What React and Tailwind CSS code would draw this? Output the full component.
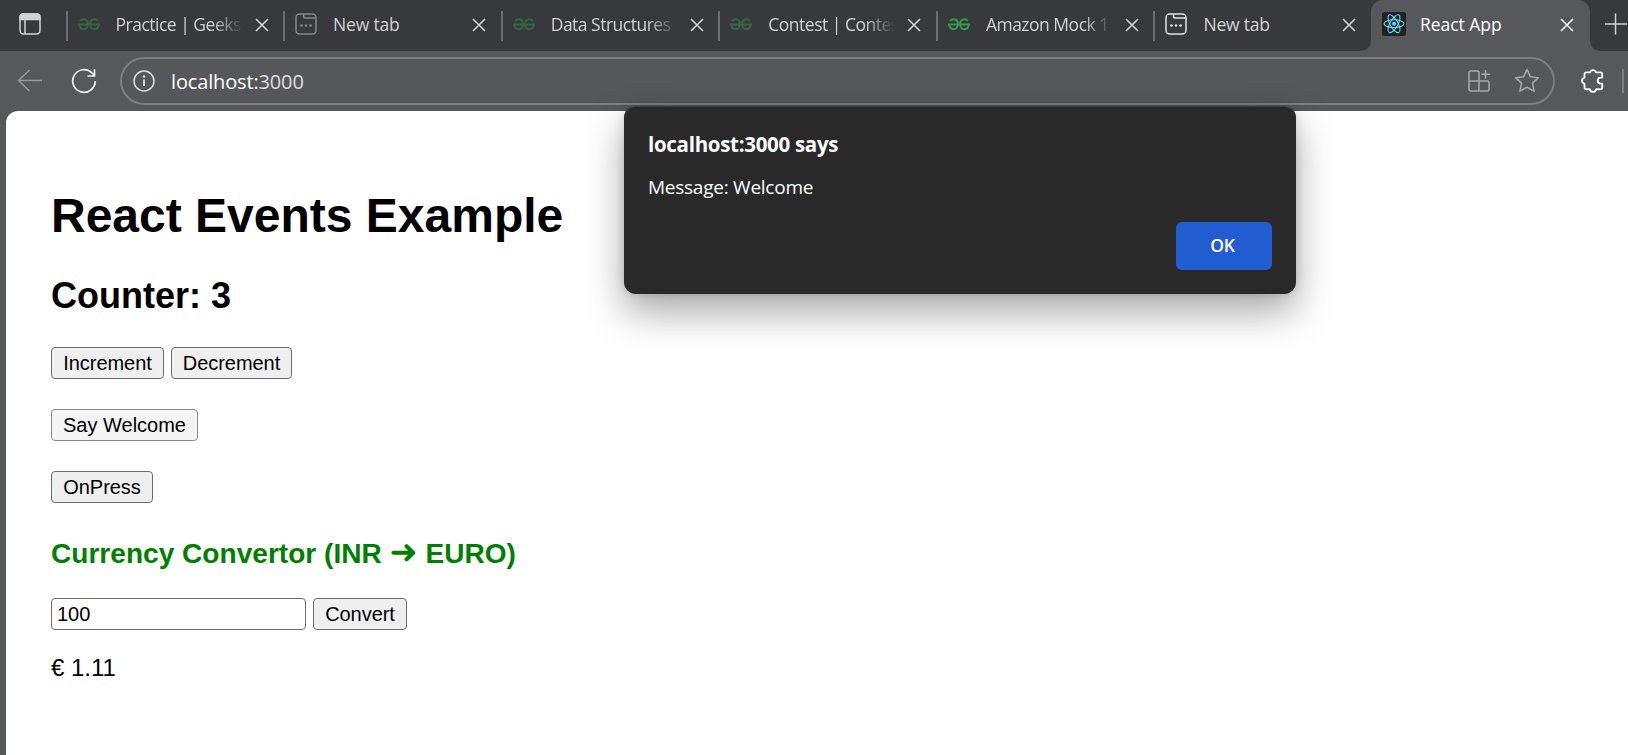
const UI = "font-['Open_Sans','Noto_Sans',sans-serif]";

const GfgIcon = ({ dim }) => (
  <svg className={`h-6 w-6 ${dim ? "opacity-45" : ""}`} viewBox="0 0 24 24" fill="none" stroke="#2f9e4b" strokeWidth="2">
    <path d="M3.2 9C4 7.700 5.200 7.200 6.500 7.200c2.700 0 4.400 1.900 4.400 4.800S9.300 17.200 6.700 17.200c-2.600 0-4.300-1.900-4.400-4.700" />
    <path d="M20.800 9c-.8-1.300-2-1.800-3.300-1.800-2.700 0-4.400 1.900-4.400 4.800s1.600 5.200 4.200 5.200 4.300-1.900 4.400-4.700" />
    <path d="M1 12.500h22" />
  </svg>
);

const NewTabIcon = ({ dim }) => (
  <svg className={`h-6 w-6 ${dim ? "opacity-45" : ""}`} viewBox="0 0 24 24" fill="none" stroke="#e4e4e5" strokeWidth="1.5">
    <rect x="2" y="2" width="20" height="20" rx="3.500" />
    <path d="M9.500 2v2.500c0 1 .5 1.500 1.500 1.500h11" />
    <g fill="#e4e4e5" stroke="none">
      <circle cx="7.500" cy="13.500" r="1.300" />
      <circle cx="12" cy="13.500" r="1.300" />
      <circle cx="16.500" cy="13.500" r="1.300" />
    </g>
  </svg>
);

const ReactIcon = () => (
  <svg className="h-6 w-6" viewBox="0 0 24 24" fill="none" stroke="#61dafb" strokeWidth="1.100">
    <rect width="24" height="24" rx="2.500" fill="#222222" stroke="none" />
    <ellipse cx="12" cy="11.700" rx="10" ry="3.900" />
    <ellipse cx="12" cy="11.700" rx="10" ry="3.900" transform="rotate(60 12 11.700)" />
    <ellipse cx="12" cy="11.700" rx="10" ry="3.900" transform="rotate(120 12 11.700)" />
    <circle cx="12" cy="11.700" r="2" fill="#61dafb" stroke="none" />
  </svg>
);

const CloseIcon = ({ bright }) => (
  <svg className="-mt-px h-3.5 w-3.5" viewBox="0 0 14 14" fill="none" stroke={bright ? "#ffffff" : "#d6d6d7"} strokeWidth="1.600">
    <path d="M1 1l12 12M13 1L1 13" />
  </svg>
);

const tabs = [
  { title: "Practice | Geeksf", icon: <GfgIcon dim />, fade: true },
  { title: "New tab", icon: <NewTabIcon dim /> },
  { title: "Data Structures", icon: <GfgIcon dim />, fade: true },
  { title: "Contest | Contes", icon: <GfgIcon dim />, fade: true },
  { title: "Amazon Mock 1", icon: <GfgIcon />, fade: true },
  { title: "New tab", icon: <NewTabIcon /> },
];

function Tab({ title, icon, fade }) {
  return (
    <div className="flex h-[51px] w-[217.600px] shrink-0 items-center">
      <div className="h-[30px] w-[2px] shrink-0 bg-[#6c6d70]" />
      <div className="ml-[9px] -mt-[3px] shrink-0">{icon}</div>
      <div
        className={`ml-[15px] -mt-[4px] w-[130px] shrink-0 overflow-hidden whitespace-nowrap text-[17.500px] leading-6 text-[#d2d2d3] ${
          fade ? "tracking-[-0.500px] [mask-image:linear-gradient(to_right,black_97px,transparent_127px)]" : "tracking-[-0.200px]"
        }`}
      >
        {title}
      </div>
      <div className="ml-[9px] shrink-0">
        <CloseIcon />
      </div>
    </div>
  );
}

function TabBar() {
  return (
    <div className="flex h-[51px] items-center overflow-hidden bg-[#38393d]">
      <div className="w-[65.500px] shrink-0 pl-[18px]">
        <svg className="-mt-[3px] h-6 w-6" viewBox="0 0 24 24" fill="none" stroke="#d2d2d3" strokeWidth="1.500">
          <rect x="2" y="2" width="20" height="20" rx="3.500" />
          <path d="M2 7.500V5a3 3 0 0 1 3-3h14a3 3 0 0 1 3 3v2.500z" fill="#d2d2d3" />
          <path d="M7 7v15" />
        </svg>
      </div>
      {tabs.map((t, i) => (
        <Tab key={i} {...t} />
      ))}
      <div className="-ml-[10px] flex h-[51px] w-[10px] shrink-0 bg-[#57585c]">
        <div className="h-full w-full rounded-br-[10px] bg-[#38393d]" />
      </div>
      <div className="flex h-[51px] w-[219px] shrink-0 items-center rounded-t-[12px] bg-[#57585c] pl-[11px]">
        <div className="-mt-[3px]">
          <ReactIcon />
        </div>
        <div className="ml-[14px] -mt-[4px] w-[129px] text-[17.500px] leading-6 tracking-[-0.050px] text-white">React App</div>
        <div className="ml-[11px]">
          <CloseIcon bright />
        </div>
      </div>
      <div className="h-[51px] w-10 shrink-0 bg-[#57585c]">
        <div className="flex h-full items-center rounded-bl-[10px] bg-[#38393d] pl-[15px]">
          <svg className="-mt-1 h-[22px] w-[22px] shrink-0" viewBox="0 0 22 22" fill="none" stroke="#d2d2d3" strokeWidth="1.500">
            <path d="M10.500 .5v21M0 11h22" />
          </svg>
        </div>
      </div>
    </div>
  );
}

function Toolbar() {
  return (
    <div className="flex h-[60px] items-center overflow-hidden bg-[#57585c]">
      <svg className="ml-[17px] h-[26px] w-[26px] shrink-0" viewBox="0 0 26 26" fill="none" stroke="#98999b" strokeWidth="1.500">
        <path d="M12.500 2L1.500 12.500l11 10.500M1.500 12.500H25" />
      </svg>
      <svg className="ml-[28px] h-[26px] w-[26px] shrink-0" viewBox="0 0 26 26" fill="none" stroke="#f2f2f2" strokeWidth="1.700">
        <path d="M24.300 13A11.300 11.300 0 1 1 21 5l2.500 2.500M23.500 1v7H16.500" />
      </svg>
      <div className="ml-[23px] flex h-12 w-[1435px] shrink-0 items-center rounded-full border-2 border-[#7e7f82] bg-[#56575b] pl-[11px]">
        <svg className="h-[22px] w-[22px] shrink-0" viewBox="0 0 22 22" fill="none" stroke="#dededf" strokeWidth="1.500">
          <circle cx="11" cy="11" r="10" />
          <path d="M11 9.500v6.500" strokeWidth="1.800" />
          <circle cx="11" cy="6.500" r="1.200" fill="#dededf" stroke="none" />
        </svg>
        <div className="ml-4 mt-px text-[20px] leading-7 tracking-[-0.150px] text-white">
          localhost:<span className="text-[#dededf]">3000</span>
        </div>
        <div className="ml-auto mr-[13px] flex items-center gap-[23px]">
          <svg className="h-6 w-6" viewBox="0 0 24 24" fill="none" stroke="#a5a6a8" strokeWidth="1.600">
            <path d="M12 12V3.500a1.500 1.500 0 0 0-1.500-1.500H4a2 2 0 0 0-2 2v16a2 2 0 0 0 2 2h16a2 2 0 0 0 2-2v-6.500a1.500 1.500 0 0 0-1.500-1.500H2M12 12v10M18.500 1v8.500M14.500 5.200H23" />
          </svg>
          <svg className="h-[26px] w-[26px]" viewBox="0 0 26 26" fill="none" stroke="#a5a6a8" strokeWidth="1.600" strokeLinejoin="round">
            <path d="M13 1.500l3.400 7.300 8 .9-5.900 5.500 1.600 7.900L13 19.200l-7.100 3.900 1.600-7.900L1.600 9.700l8-.9z" />
          </svg>
        </div>
      </div>
      <svg className="ml-[26px] h-6 w-6 shrink-0" viewBox="0 0 24 24" fill="none" stroke="#f2f2f2" strokeWidth="1.900" strokeLinejoin="round">
        <path d="M8.800 3.400C9.400 1.900 10.600 1.100 12 1.100s2.600.8 3.200 2.300H19.500a1.700 1.700 0 0 1 1.700 1.700V8.600h-1.500a3 3 0 0 0 0 6h1.500v4a1.700 1.700 0 0 1-1.700 1.700H15.200C14.600 21.900 13.400 22.900 12 22.900s-2.600-1-3.200-2.600H5.200a1.700 1.700 0 0 1-1.700-1.700v-3.800C2 14.200 1 13.200 1 11.700s1-2.600 2.500-3.100V5.100A1.700 1.700 0 0 1 5.200 3.400z" />
      </svg>
      <div className="ml-[17px] h-6 w-[2px] shrink-0 bg-[#7e7f82]" />
    </div>
  );
}

const BTN = "h-8 rounded-[4px] border border-[#6b6b6b] bg-[#efefef] text-[20px] leading-[22px] tracking-[-0.050px] text-black";

function Page() {
  return (
    <div className="flex-1 bg-[#57585c] pl-1.5">
      <div className="h-full rounded-tl-[12px] bg-white pl-[45px] pt-[76px] font-['Liberation_Sans',Arial,sans-serif] text-black">
        <h1 className="text-[48px] font-bold leading-[57px]">React Events Example</h1>
        <h2 className="mt-[31px] text-[36px] font-bold leading-[42px]">Counter: 3</h2>
        <div className="mt-[30px] flex gap-[7px]">
          <button className={`${BTN} w-[113px]`}>Increment</button>
          <button className={`${BTN} w-[121px]`}>Decrement</button>
        </div>
        <button className="mt-[30px] block h-8 w-[147px] rounded-[4px] border border-[#8c8c8c] bg-[#f5f5f5] text-[20px] leading-[22px] text-black">
          Say Welcome
        </button>
        <button className={`${BTN} mt-[30px] block w-[102px]`}>OnPress</button>
        <h3 className="mt-[35px] h-8 text-[28.080px] font-bold leading-8 text-[#008000]">
          Currency Convertor (INR{" "}
          <span className="font-['DejaVu_Sans',sans-serif] text-[33.500px] font-normal leading-[0]">➜</span> EURO)
        </h3>
        <div className="mt-[28px] flex gap-[7px]">
          <input
            className="h-8 w-[255px] rounded-[4px] border border-[#6b6b6b] bg-white px-[5px] text-[20px] leading-[22px] text-black"
            defaultValue="100"
          />
          <button className={`${BTN} w-[94px]`}>Convert</button>
        </div>
        <p className="mt-6 text-[24px] leading-7">€ 1.11</p>
      </div>
    </div>
  );
}

function AlertDialog() {
  return (
    <div className="absolute left-[624px] top-[106px] flex h-[188px] w-[672px] flex-col rounded-[12px] border-t border-[#3c3d40] bg-[#292929] px-6 pt-[23px] text-white shadow-[0_18px_38px_rgba(0,0,0,0.34),0_0_10px_rgba(0,0,0,0.14)]">
      <div className="h-7 text-[20.500px] font-bold leading-7 tracking-[-0.300px]">localhost:3000 says</div>
      <div className="mt-[15px] h-7 text-[19px] leading-7 tracking-[-0.250px]">Message: Welcome</div>
      <button className="mt-[21px] h-12 w-24 self-end rounded-[6px] bg-[#225cd1] pb-px pr-[3px] text-[17.500px] font-semibold tracking-[-0.300px]">
        OK
      </button>
    </div>
  );
}

export default function App() {
  return (
    <div className={`relative flex h-[755px] w-[1628px] flex-col overflow-hidden ${UI}`}>
      <TabBar />
      <Toolbar />
      <Page />
      <AlertDialog />
    </div>
  );
}
